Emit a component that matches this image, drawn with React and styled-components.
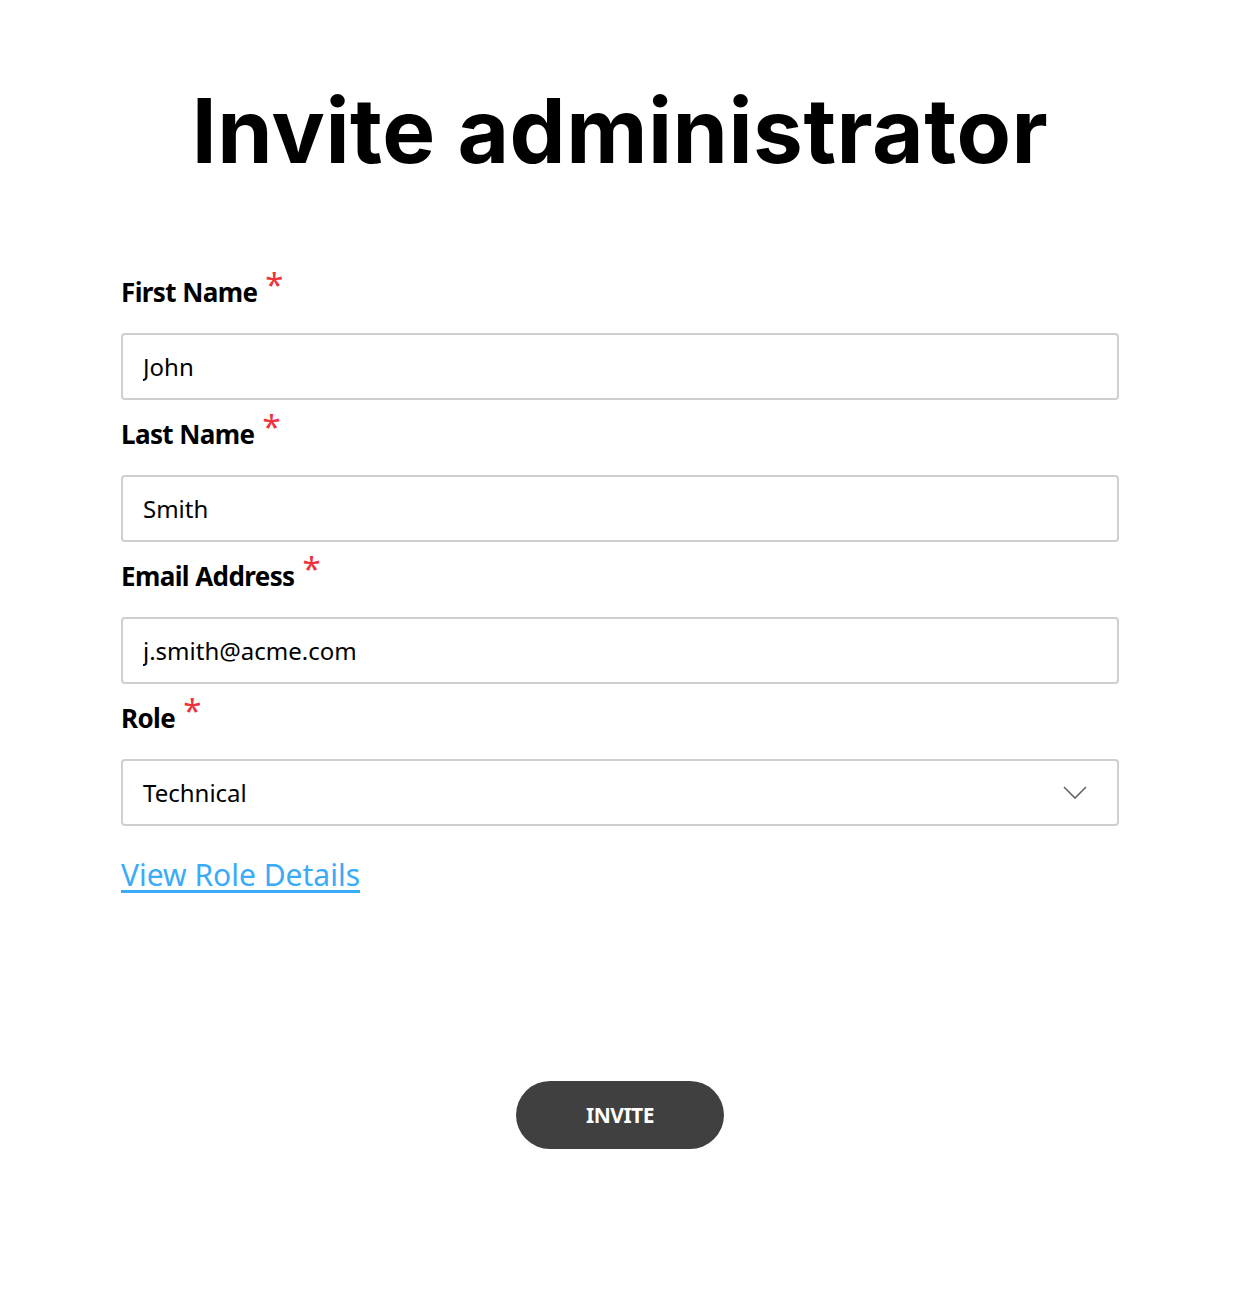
import styled, { createGlobalStyle } from "styled-components";

const Global = createGlobalStyle`
  body {
    margin: 0;
    background: #fff;
    font-family: "Noto Sans", "Open Sans", sans-serif;
    color: #000;
  }
`;

const Page = styled.main`
  width: 1259px;
  padding: 0 0 140px 121px;
  box-sizing: border-box;
`;

const Form = styled.form`
  width: 998px;
  display: flex;
  flex-direction: column;
`;

const Title = styled.h1`
  font-family: Inter, "Liberation Sans", sans-serif;
  font-weight: 700;
  font-size: 89px;
  letter-spacing: 0.5px;
  line-height: 1;
  text-align: center;
  margin: 86px 0 104px;
`;

const Label = styled.label`
  display: block;
  font-size: 26px;
  font-weight: 700;
  letter-spacing: -0.6px;
  line-height: 1;
  margin: 21px 0 28px;
  &:first-of-type {
    margin-top: 0;
  }
`;

const Star = styled.span`
  position: relative;
  top: -5px;
  color: #f0303a;
  font-weight: 400;
  font-size: 33px;
  line-height: 0;
  margin-left: 8px;
`;

const Field = styled.div`
  position: relative;
  height: 67px;
  border: 2px solid #cfcfcf;
  border-radius: 4px;
  box-sizing: border-box;
  display: flex;
  align-items: center;
  padding: 0 20px;
  font-size: 24px;
`;

const Input = styled.input`
  border: none;
  outline: none;
  font: inherit;
  width: 100%;
  padding: 0;
  background: transparent;
  color: #000;
`;

const Chevron = styled.svg`
  position: absolute;
  right: 30px;
  top: 50%;
  transform: translateY(-50%);
`;

const Link = styled.a`
  color: #3aabf7;
  font-size: 30px;
  line-height: 1.36;
  text-decoration: underline;
  text-underline-offset: 4px;
  margin-top: 29px;
  align-self: flex-start;
`;

const Button = styled.button`
  align-self: center;
  margin-top: 185px;
  width: 208px;
  height: 68px;
  border: none;
  border-radius: 34px;
  background: #404040;
  color: #fff;
  font-family: inherit;
  font-weight: 700;
  font-size: 21px;
  letter-spacing: -0.5px;
  cursor: pointer;
`;

function TextField({ label, value }) {
  return (
    <>
      <Label>
        {label}
        <Star>*</Star>
      </Label>
      <Field>
        <Input defaultValue={value} />
      </Field>
    </>
  );
}

export default function App() {
  return (
    <Page>
      <Global />
      <Form onSubmit={(e) => e.preventDefault()}>
        <Title>Invite administrator</Title>
        <TextField label="First Name" value="John" />
        <TextField label="Last Name" value="Smith" />
        <TextField label="Email Address" value="j.smith@acme.com" />
        <Label>
          Role<Star>*</Star>
        </Label>
        <Field>
          Technical
          <Chevron width="24" height="14" viewBox="0 0 24 14" fill="none">
            <path d="M1 1l11 11L23 1" stroke="#666" strokeWidth="1.6" />
          </Chevron>
        </Field>
        <Link href="#">View Role Details</Link>
        <Button type="submit">INVITE</Button>
      </Form>
    </Page>
  );
}
